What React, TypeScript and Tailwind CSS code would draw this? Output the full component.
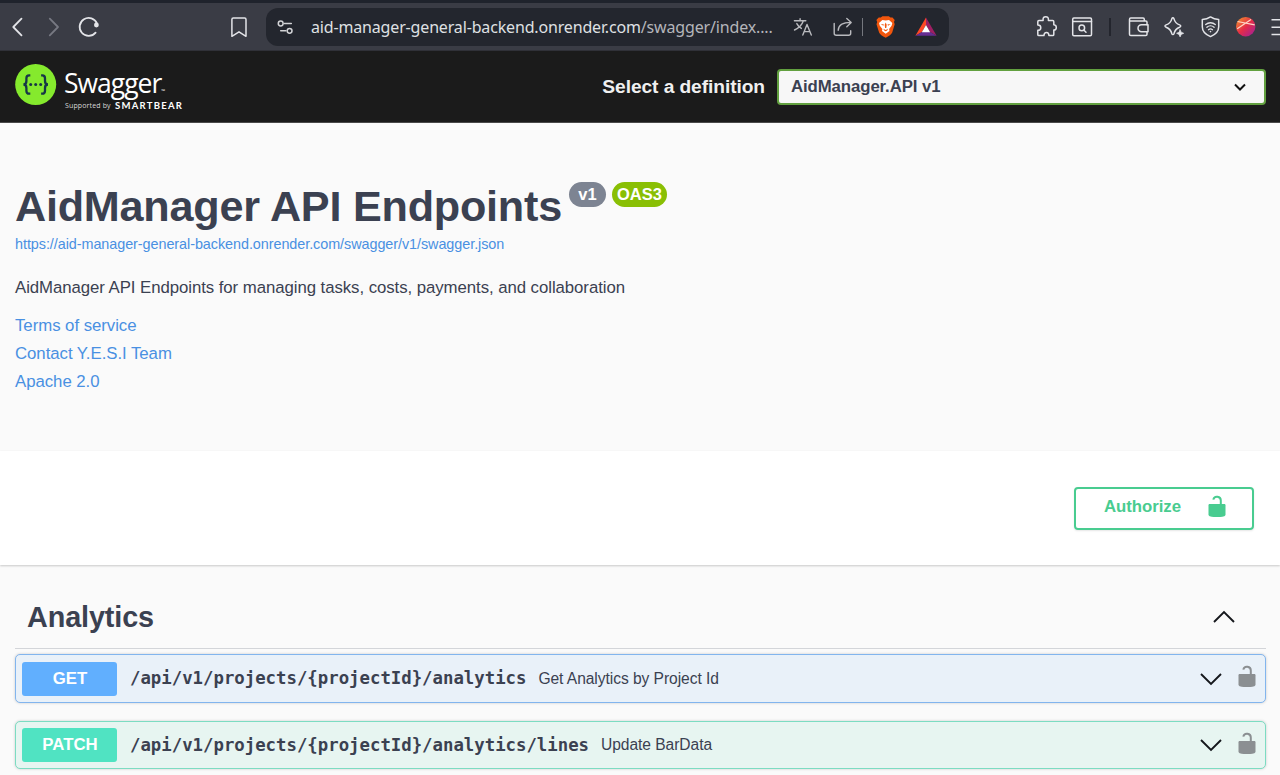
import React from 'react';

type IconProps = { className?: string; children: React.ReactNode };

function Icon({ className = '', children }: IconProps) {
  return (
    <svg
      viewBox="0 0 24 24"
      className={`h-6 w-6 shrink-0 ${className}`}
      fill="none"
      stroke="currentColor"
      strokeWidth="1.5"
      strokeLinecap="round"
      strokeLinejoin="round"
    >
      {children}
    </svg>
  );
}

function Toolbar() {
  return (
    <div className="flex h-[51px] items-center overflow-hidden border-t-3 border-[#1f232c] bg-[#3a3c45] pl-[5px] text-[#e3e4e8] shadow-[inset_0_-1px_0_#303138]">
      <Icon>
        <path d="M16.500 3.600 8.300 12l8.200 8.400" strokeWidth="1.8" />
      </Icon>
      <Icon className="ml-[13px] text-[#777982]">
        <path d="m7.800 3.600 8.200 8.400-8.200 8.400" strokeWidth="1.8" />
      </Icon>
      <Icon className="ml-[11px]">
        <path d="M20 8.500A9 9 0 1 0 18.600 17.600" strokeWidth="1.8" />
        <circle cx="19.400" cy="10" r="2.400" fill="currentColor" stroke="none" />
      </Icon>
      <Icon className="ml-[126px]">
        <path d="M4.900 4.400c0-.8.6-1.400 1.400-1.400h11.300c.8 0 1.400.6 1.400 1.400V21.300L12 16.800l-7.100 4.500Z" />
      </Icon>

      <div className="ml-[15px] flex h-[38px] w-[683px] shrink-0 items-center rounded-xl bg-[#23262e] pl-[7px] text-[#b9babe]">
        <Icon className="text-[#d2d3d6]">
          <circle cx="7.700" cy="8.500" r="2.400" />
          <path d="M11.300 8.500h7M7.700 15.800h5.200" />
          <circle cx="16.600" cy="15.800" r="2.400" />
        </Icon>
        <div className="ml-3.5 w-[480px] shrink-0 whitespace-nowrap font-['Noto_Sans',sans-serif] text-[16px] leading-6 tracking-[-0.16px]">
          <span className="text-[#dfe0e3]">aid-manager-general-backend.onrender.com</span>
          <span className="text-[#b4b5ba]">/swagger/index....</span>
        </div>
        <Icon>
          <path d="M3.400 5.800h11.400M9.100 3.800v2M12.400 5.800C11 10 7.500 13.200 3.500 15M5.800 8.600c1 2 2.500 3.500 4.600 4.800" strokeWidth="1.4" />
          <path d="m11.800 20 4.200-10.600L20.300 20M13.200 16.600h5.700" strokeWidth="1.4" />
        </Icon>
        <Icon className="ml-4">
          <path d="M3.200 8.500v9.700c0 1.200.8 2 2 2h12.500c1.200 0 2-.8 2-2v-2.500" strokeWidth="1.4" />
          <path d="M7.200 15.200c.3-5.400 4-7.800 12.700-7.800M15.800 3.500l4.400 3.900-4.400 4.300" strokeWidth="1.4" />
        </Icon>
        <div className="ml-[7px] h-[18px] w-px shrink-0 bg-[#75777e]" />
        <svg viewBox="0 0 24 24" className="ml-[11px] h-6 w-6 shrink-0">
          <path d="M6.800 2.500 8.400 1.200h6.400l1.700 1.300 2-.1 2.200 2.700-.7 1.900.7 2.200-2.500 8.400c-.6 1.800-3.300 3.600-6.500 5.200-3.300-1.600-6-3.400-6.600-5.200L2.500 9.200 3.200 7l-.8-1.900 2.300-2.700Z" fill="#f1560d" />
          <path d="m8.400 5 3.300.6L15 5l3.300 3.100-.7 2.600-2.500 3.200.4 2.100-3.800 2.800L8 16l.4-2.100-2.600-3.200-.8-2.600Z" fill="#fff" />
          <path d="m6.700 8.900 3.300.7-.7 1.200Zm10 0-3.300.7.7 1.200ZM11.700 7.500l1 2.300-.4 3.200h-1.200l-.4-3.200Zm-2.400 6.200 2.400 1.200 2.400-1.200-.9 1.700-1.500.9-1.500-.9Z" fill="#f1560d" />
        </svg>
        <svg viewBox="0 0 24 24" className="ml-4 h-6 w-6 shrink-0">
          <path d="M12 2.600 1.400 20.800l6.500-3.700L12 10Z" fill="#ff4724" />
          <path d="M12 2.600 22.600 20.800l-6.500-3.700L12 10Z" fill="#9e1f63" />
          <path d="M1.400 20.800h21.200l-6.500-3.700H7.900Z" fill="#662d91" />
          <path d="m12 10-4.200 7.200h8.400Z" fill="#fff" />
        </svg>
      </div>

      <Icon className="ml-[85px]">
        <path d="M4.900 5.600h4.200c-.3-3 .7-3.800 2.600-3.800s3 .8 2.700 3.800h4.300c.7 0 1.100.4 1.100 1.100v3.100c1.400.2 2.500 1.100 2.500 2.600s-1.100 2.600-2.500 2.700v4.400c0 .7-.4 1.100-1.100 1.100h-3.800c0-2-.9-3.100-2.400-3.100s-2.500 1.100-2.600 3.100H4.900c-.7 0-1.100-.4-1.100-1.100v-4.200c2 0 3-1 3-2.600s-1-2.700-3-2.700V6.700c0-.7.4-1.100 1.100-1.100Z" />
      </Icon>
      <Icon className="ml-3">
        <rect x="2.700" y="3.100" width="18.800" height="17.600" rx="1.200" />
        <path d="M2.700 6.600h18.800" />
        <circle cx="11.800" cy="12.900" r="2.800" />
        <path d="m14 15.200 2 2" />
      </Icon>
      <div className="ml-[15px] h-[18px] w-0.5 shrink-0 bg-[#23252d]" />
      <Icon className="ml-[15px]">
        <path d="M21 9.800V7.200c0-.7-.5-1.200-1.200-1.200H3.500M18.300 6V4.300c0-.7-.5-1.200-1.200-1.200H4.800c-.8 0-1.300.5-1.300 1.300v14.800c0 .8.5 1.300 1.300 1.300h14.900c.8 0 1.300-.5 1.300-1.300v-2.400" />
        <path d="M22 9.800h-6.500a3.500 3.500 0 0 0 0 7H22Z" />
      </Icon>
      <Icon className="ml-3">
        <path d="M10.900 2.800c.5 0 .8.3 1 .8 1 3.700 2.200 5.100 5.700 6.300 1.500.5 1.500 1.800 0 2.300-3.500 1.200-4.700 2.700-5.700 6.500-.3 1-1.700 1-2 0-1-3.800-2.200-5.300-5.800-6.500-1.500-.5-1.500-1.800 0-2.300 3.600-1.200 4.800-2.600 5.800-6.300.2-.5.5-.8 1-.8Z" />
        <path d="m18.100 14.800 1.100 2.400 2.500 1.100-2.500 1.100-1.100 2.500-1.100-2.500-2.400-1.100 2.400-1.100Z" fill="currentColor" stroke="currentColor" strokeWidth=".7" />
      </Icon>
      <Icon className="ml-3">
        <path d="M12.500 1.900c2.500 1.700 4.800 2.400 8.200 2.500v7.300c0 4.500-3 7.700-8.200 9.900-5.200-2.200-8.200-5.400-8.200-9.900V4.400c3.400-.1 5.700-.8 8.200-2.500Z" />
        <path d="M7.700 9.600a7.200 7.200 0 0 1 9.600 0M8.900 12.200a5.400 5.400 0 0 1 7.200 0M10.500 14.700a3.300 3.300 0 0 1 4 0" strokeWidth="1.3" />
        <circle cx="12.500" cy="16.600" r=".8" fill="currentColor" stroke="none" />
      </Icon>
      <svg viewBox="0 0 24 24" className="ml-[11px] h-6 w-6 shrink-0">
        <defs>
          <linearGradient id="avatar" x1="0" y1="0" x2="1" y2="1">
            <stop offset="0.15" stopColor="#ef7d32" />
            <stop offset="0.5" stopColor="#e52c48" />
            <stop offset="1" stopColor="#9a1fa0" />
          </linearGradient>
        </defs>
        <circle cx="12.700" cy="11.700" r="9.700" fill="url(#avatar)" />
        <path d="m4.500 6.500 17.200 3.300M4.200 13.800 18 4.500" stroke="#ffd5c4" strokeWidth="1.2" />
      </svg>
      <svg viewBox="0 0 9 24" className="ml-3.5 h-6 w-[9px] shrink-0 text-[#e3e4e8]" stroke="currentColor" strokeWidth="1.5">
        <path d="M.5 4.800H9M.5 12.200H9M.5 19.400H9" />
      </svg>
    </div>
  );
}

function Header() {
  return (
    <header className="flex h-[72px] items-center border-b border-[#4a4a4a] bg-[#1b1b1b] pr-[14px] pl-[15px]">
      <svg viewBox="0 0 42 42" className="-mt-1 h-[42px] w-[42px] shrink-0">
        <circle cx="20.700" cy="20.500" r="20.500" fill="#85ea2d" />
        <g fill="none" stroke="#173647" strokeWidth="2.3">
          <path d="M15.300 11.300h-1.200c-2 0-2.700 1-2.700 3v2.800c0 2-.9 3.400-3 3.400 2.100 0 3 1.400 3 3.400v2.800c0 2 .7 3 2.700 3h1.200" />
          <path d="M26.100 11.300h1.200c2 0 2.700 1 2.700 3v2.800c0 2 .9 3.400 3 3.400-2.100 0-3 1.400-3 3.400v2.800c0 2-.7 3-2.700 3h-1.200" />
        </g>
        <g fill="#173647">
          <circle cx="15.700" cy="20.500" r="1.500" />
          <circle cx="20.700" cy="20.500" r="1.500" />
          <circle cx="25.700" cy="20.500" r="1.500" />
        </g>
      </svg>
      <div className="ml-[7px] flex h-[72px] w-[130px] shrink-0 flex-col pt-[14px] font-['Open_Sans',sans-serif] whitespace-nowrap text-white">
        <div className="h-[36px] text-[26.500px] leading-[36px] tracking-[-1px]">
          Swagger<span className="text-[5px] tracking-normal">™</span>
        </div>
        <div className="flex h-2.5 items-center leading-[10px]">
          <span className="w-[51px] pl-px text-[7px] tracking-[0.14px] text-[#d8d8d8]">Supported by</span>
          <span className="font-['Lato',sans-serif] text-[9.500px] font-bold tracking-[1.25px]">SMARTBEAR</span>
        </div>
      </div>
      <div className="ml-auto pt-px text-[19.200px] font-bold tracking-[-0.08px] whitespace-nowrap text-[#f0f0f0]">Select a definition</div>
      <div className="ml-[12px] flex h-9 w-[489px] shrink-0 items-center justify-between rounded border-2 border-[#62a03f] bg-[#f7f7f7] pr-[17px] pl-3 text-[16.800px] font-bold text-[#3b4151]">
        <span className="tracking-[-0.1px]">AidManager.API v1</span>
        <svg viewBox="0 0 14 10" className="h-[10px] w-3.5" fill="none" stroke="#111" strokeWidth="2">
          <path d="m2 2.500 5 5 5-5" />
        </svg>
      </div>
    </header>
  );
}

function Lock({ className = '' }: { className?: string }) {
  return (
    <svg viewBox="0 0 20 24" className={`h-6 w-5 shrink-0 ${className}`} fill="currentColor">
      <path d="M13.800 9.500V5.600a3.800 3.800 0 0 0-7.500-1" fill="none" stroke="currentColor" strokeWidth="2" />
      <path d="M2.800 9h14.400c.8 0 1.300.5 1.300 1.300v9.300c0 .8-.4 1.300-1.200 1.600-1.400.5-2.500.8-4 .8H6.700c-1.500 0-2.600-.3-4-.8-.8-.3-1.200-.8-1.200-1.600v-9.300C1.500 9.500 2 9 2.800 9Z" />
    </svg>
  );
}

function Chevron({ up = false, className = '' }: { up?: boolean; className?: string }) {
  return (
    <svg viewBox="0 0 24 14" className={`h-3.5 w-6 shrink-0 ${className}`} fill="none" stroke="#15171c" strokeWidth="1.9">
      <path d={up ? 'm2 12 10-10 10 10' : 'm2 2 10 10L22 2'} />
    </svg>
  );
}

type OperationProps = { method: string; path: string; summary: string; box: string; badge: string };

function Operation({ method, path, summary, box, badge }: OperationProps) {
  return (
    <div className={`mr-[14px] ml-[15px] flex items-center rounded-[5px] border pr-2 pl-1.5 text-[#3b4151] ${box}`}>
      <div className={`h-[34px] w-[95px] shrink-0 rounded-[3px] pl-px text-center text-[16.800px] leading-[33px] font-bold text-white ${badge}`}>
        {method}
      </div>
      <div className="ml-[13px] font-['DejaVu_Sans_Mono',monospace] text-[17.340px] font-bold whitespace-nowrap">{path}</div>
      <div className="ml-3 text-[15.600px] tracking-[-0.06px] whitespace-nowrap">{summary}</div>
      <Chevron className="ml-auto" />
      <Lock className="-mt-[3px] ml-3.5 text-[#8b8f92]" />
    </div>
  );
}

export default function App() {
  return (
    <div className="h-[775px] w-[1280px] overflow-hidden bg-[#fafafa] font-['Liberation_Sans',Arial,sans-serif]">
      <Toolbar />
      <Header />
      <section className="h-[328px] px-[15px] pt-[59px]">
        <div className="flex h-[50px] items-start font-bold whitespace-nowrap">
          <h1 className="-mt-px text-[43.200px] leading-[50px] tracking-[-0.24px] text-[#3b4151]">AidManager API Endpoints</h1>
          <span className="ml-[7px] flex h-[25px] w-[37px] justify-center rounded-full bg-[#7d8492] text-[16.500px] leading-6 text-white">v1</span>
          <span className="ml-1.5 flex h-[25px] w-[55px] justify-center rounded-full bg-[#89bf04] text-[16.500px] leading-6 text-white">OAS3</span>
        </div>
        <div className="mt-0.5 text-[14.400px] leading-5 tracking-[-0.06px] text-[#4990e2]">https://aid-manager-general-backend.onrender.com/swagger/v1/swagger.json</div>
        <div className="mt-[22px] text-[16.800px] leading-6 tracking-[-0.06px] text-[#3b4151]">AidManager API Endpoints for managing tasks, costs, payments, and collaboration</div>
        <div className="mt-3 text-[16.800px] leading-7 tracking-[-0.04px] text-[#4990e2]">
          <div>Terms of service</div>
          <div>Contact Y.E.S.I Team</div>
          <div>Apache 2.0</div>
        </div>
      </section>
      <section className="flex h-[114px] justify-end bg-white pt-9 pr-[26px] shadow-[0_1px_2px_rgba(0,0,0,0.2)]">
        <div className="flex h-[43px] w-[180px] rounded border-2 border-[#49cc90] pt-1.5 pl-7 text-[#49cc90] shadow-[0_1px_2px_rgba(0,0,0,0.1)]">
          <span className="w-[103px] text-[16.800px] leading-6 font-bold tracking-[-0.04px]">Authorize</span>
          <Lock />
        </div>
      </section>
      <section>
        <div className="mr-[14px] mb-[5px] ml-[15px] flex h-[84px] items-center border-b border-[#d3d5d9] pt-5 pr-[30px] pl-3">
          <h2 className="pt-px text-[28.800px] leading-9 font-bold tracking-[-0.12px] text-[#3b4151]">Analytics</h2>
          <Chevron up className="ml-auto" />
        </div>
        <Operation
          method="GET"
          path="/api/v1/projects/{projectId}/analytics"
          summary="Get Analytics by Project Id"
          box="mb-[18px] h-[49px] border-[#82b5ee] bg-[#e9f1f9] shadow-[0_0_3px_rgba(0,0,0,0.19)]"
          badge="bg-[#61affe]"
        />
        <Operation
          method="PATCH"
          path="/api/v1/projects/{projectId}/analytics/lines"
          summary="Update BarData"
          box="h-12 border-[#7cdcc2] bg-[#e7f5f1] shadow-[0_0_3px_rgba(0,0,0,0.19)]"
          badge="bg-[#50e3c2]"
        />
      </section>
    </div>
  );
}
